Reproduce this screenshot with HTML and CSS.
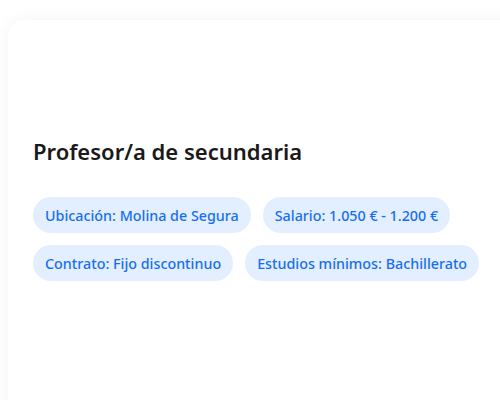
FILE: index.html
```html
<!DOCTYPE html>
<html lang="es">
<head>
<meta charset="utf-8">
<link rel="stylesheet" href="styles.css">
</head>
<body>
<div class="page">
  <div class="card">
    <div class="media"></div>
    <h1 class="title">Profesor/a de secundaria</h1>
    <div class="tags">
      <span class="tag">Ubicación: Molina de Segura</span>
      <span class="tag">Salario: 1.050 € - 1.200 €</span>
      <span class="tag">Contrato: Fijo discontinuo</span>
      <span class="tag">Estudios mínimos: Bachillerato</span>
    </div>
  </div>
</div>
</body>
</html>
```
FILE: styles.css
```css
html, body {
  margin: 0;
  padding: 0;
  background: #ffffff;
}
.page {
  padding: 20px 0 0 8px;
  height: 400px;
  width: 500px;
  box-sizing: border-box;
  overflow: hidden;
}
.card {
  background: #ffffff;
  border-radius: 16px;
  box-shadow: 0 0 16px rgba(0, 0, 0, 0.05);
  padding: 24px 24px 0 25px;
  height: 420px;
  width: 520px;
  box-sizing: border-box;
  font-family: "Noto Sans", sans-serif;
}
.media {
  height: 92px;
}
.title {
  margin: 0;
  font-size: 22px;
  font-weight: 600;
  color: #1a1a1a;
  line-height: 30px;
}
.tags {
  margin-top: 31px;
  display: flex;
  flex-wrap: wrap;
  gap: 12px;
  width: 450px;
}
.tag {
  display: inline-flex;
  align-items: center;
  height: 36px;
  padding: 0 12px;
  border-radius: 18px;
  background: #e3efff;
  color: #176ef0;
  font-size: 14.3px;
  font-weight: 500;
}
```
